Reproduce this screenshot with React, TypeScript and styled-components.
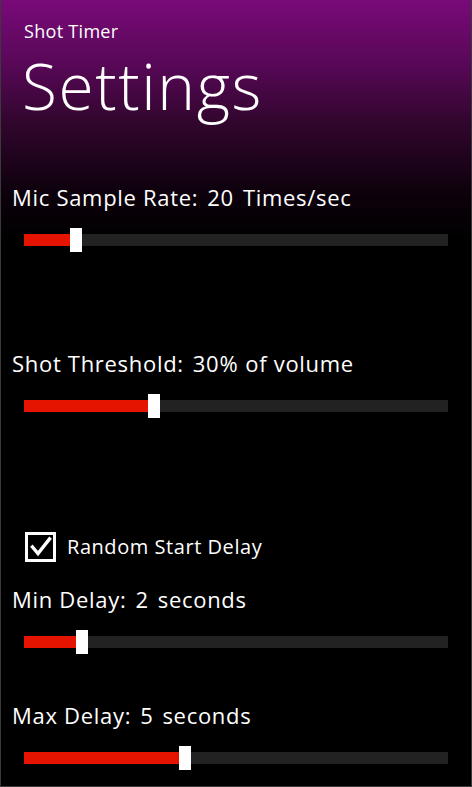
import styled, { createGlobalStyle } from 'styled-components'

const GlobalStyle = createGlobalStyle`
  html, body {
    margin: 0;
    padding: 0;
    background: #000;
  }
  * {
    box-sizing: border-box;
  }
`

const FONT = `"Open Sans", "Noto Sans", "Liberation Sans", sans-serif`
const ACCENT = '#e51400'

type SettingDef = {
  label: string,
  value: number,
  unit?: string,
  min: number,
  max: number,
  gap: number,
}

const Page = styled.div`
  width: 472px;
  height: 787px;
  overflow: hidden;
  border: 1px solid #3a3a3a;
  border-top: none;
  background: linear-gradient(
    to bottom,
    #790a78 0px,
    #5a085a 60px,
    #33062f 120px,
    #0e010d 190px,
    #000 240px
  );
  font-family: ${FONT};
  color: #fff;
`

const Header = styled.header`
  padding: 22px 0 0 23px;
`

const AppName = styled.div`
  font-size: 18px;
  line-height: 18px;
  font-weight: 400;
  letter-spacing: 0.3px;
`

const PageTitle = styled.h1`
  margin: 14px 0 0 -2px;
  font-size: 64px;
  line-height: 64px;
  font-weight: 300;
  letter-spacing: 1.6px;
`

const Content = styled.main`
  display: flex;
  flex-direction: column;
`

const Group = styled.section<{ $mt: number }>`
  display: flex;
  flex-direction: column;
  gap: 20px;
  margin-top: ${p => p.$mt}px;
`

const Label = styled.div`
  display: flex;
  padding-left: 11px;
  font-size: 22px;
  line-height: 22px;
  letter-spacing: 0.7px;
  white-space: nowrap;
`

const Part = styled.span<{ $gap?: number }>`
  margin-left: ${p => p.$gap ?? 9}px;
`

const SliderWrap = styled.div`
  position: relative;
  display: flex;
  align-items: center;
  height: 24px;
  margin: 0 23px 0 23px;
`

const Track = styled.div`
  flex: 1;
  display: flex;
  height: 12px;
  background: #222;
`

const Fill = styled.div`
  height: 100%;
  background: ${ACCENT};
`

const Thumb = styled.div`
  position: absolute;
  top: 0;
  width: 12px;
  height: 24px;
  background: #fff;
`

const CheckRow = styled.label<{ $mt: number }>`
  display: flex;
  align-items: center;
  gap: 11px;
  margin-top: ${p => p.$mt}px;
  padding-left: 24px;
  font-size: 20px;
  line-height: 20px;
  letter-spacing: 0.55px;
`

const Box = styled.span`
  display: flex;
  align-items: center;
  justify-content: center;
  width: 31px;
  height: 30px;
  border: 3px solid #fff;
`

const TRACK = 426
const THUMB = 12

const Slider = ({ value, min, max }: { value: number, min: number, max: number }) => {
  const pos = ((value - min) / (max - min)) * (TRACK - THUMB)
  return (
    <SliderWrap>
      <Track>
        <Fill style={{ width: pos }} />
      </Track>
      <Thumb style={{ left: pos }} />
    </SliderWrap>
  )
}

const Setting = ({ label, value, unit, min, max, gap }: SettingDef) => (
  <Group $mt={gap}>
    <Label>
      {label}
      <Part>{value}{unit === '%' ? '%' : ''}</Part>
      {unit && unit !== '%' && <Part>{unit}</Part>}
      {unit === '%' && <Part $gap={7}>of volume</Part>}
    </Label>
    <Slider value={value} min={min} max={max} />
  </Group>
)

const App = () => (
  <Page>
    <GlobalStyle />
    <Header>
      <AppName>Shot Timer</AppName>
      <PageTitle>Settings</PageTitle>
    </Header>
    <Content>
      <Setting label="Mic Sample Rate:" value={20} unit="Times/sec" min={10} max={100} gap={68} />
      <Setting label="Shot Threshold:" value={30} unit="%" min={0} max={100} gap={100} />
      <CheckRow $mt={114}>
        <Box>
          <svg width="24" height="24" viewBox="0 0 24 24">
            <polyline points="3.5,12 9,18.5 20.5,4" fill="none" stroke="#fff" strokeWidth="3.4" strokeLinecap="square" />
          </svg>
        </Box>
        Random Start Delay
      </CheckRow>
      <Setting label="Min Delay:" value={2} unit="seconds" min={1} max={9} gap={26} />
      <Setting label="Max Delay:" value={5} unit="seconds" min={2} max={10} gap={50} />
    </Content>
  </Page>
)

export default App
